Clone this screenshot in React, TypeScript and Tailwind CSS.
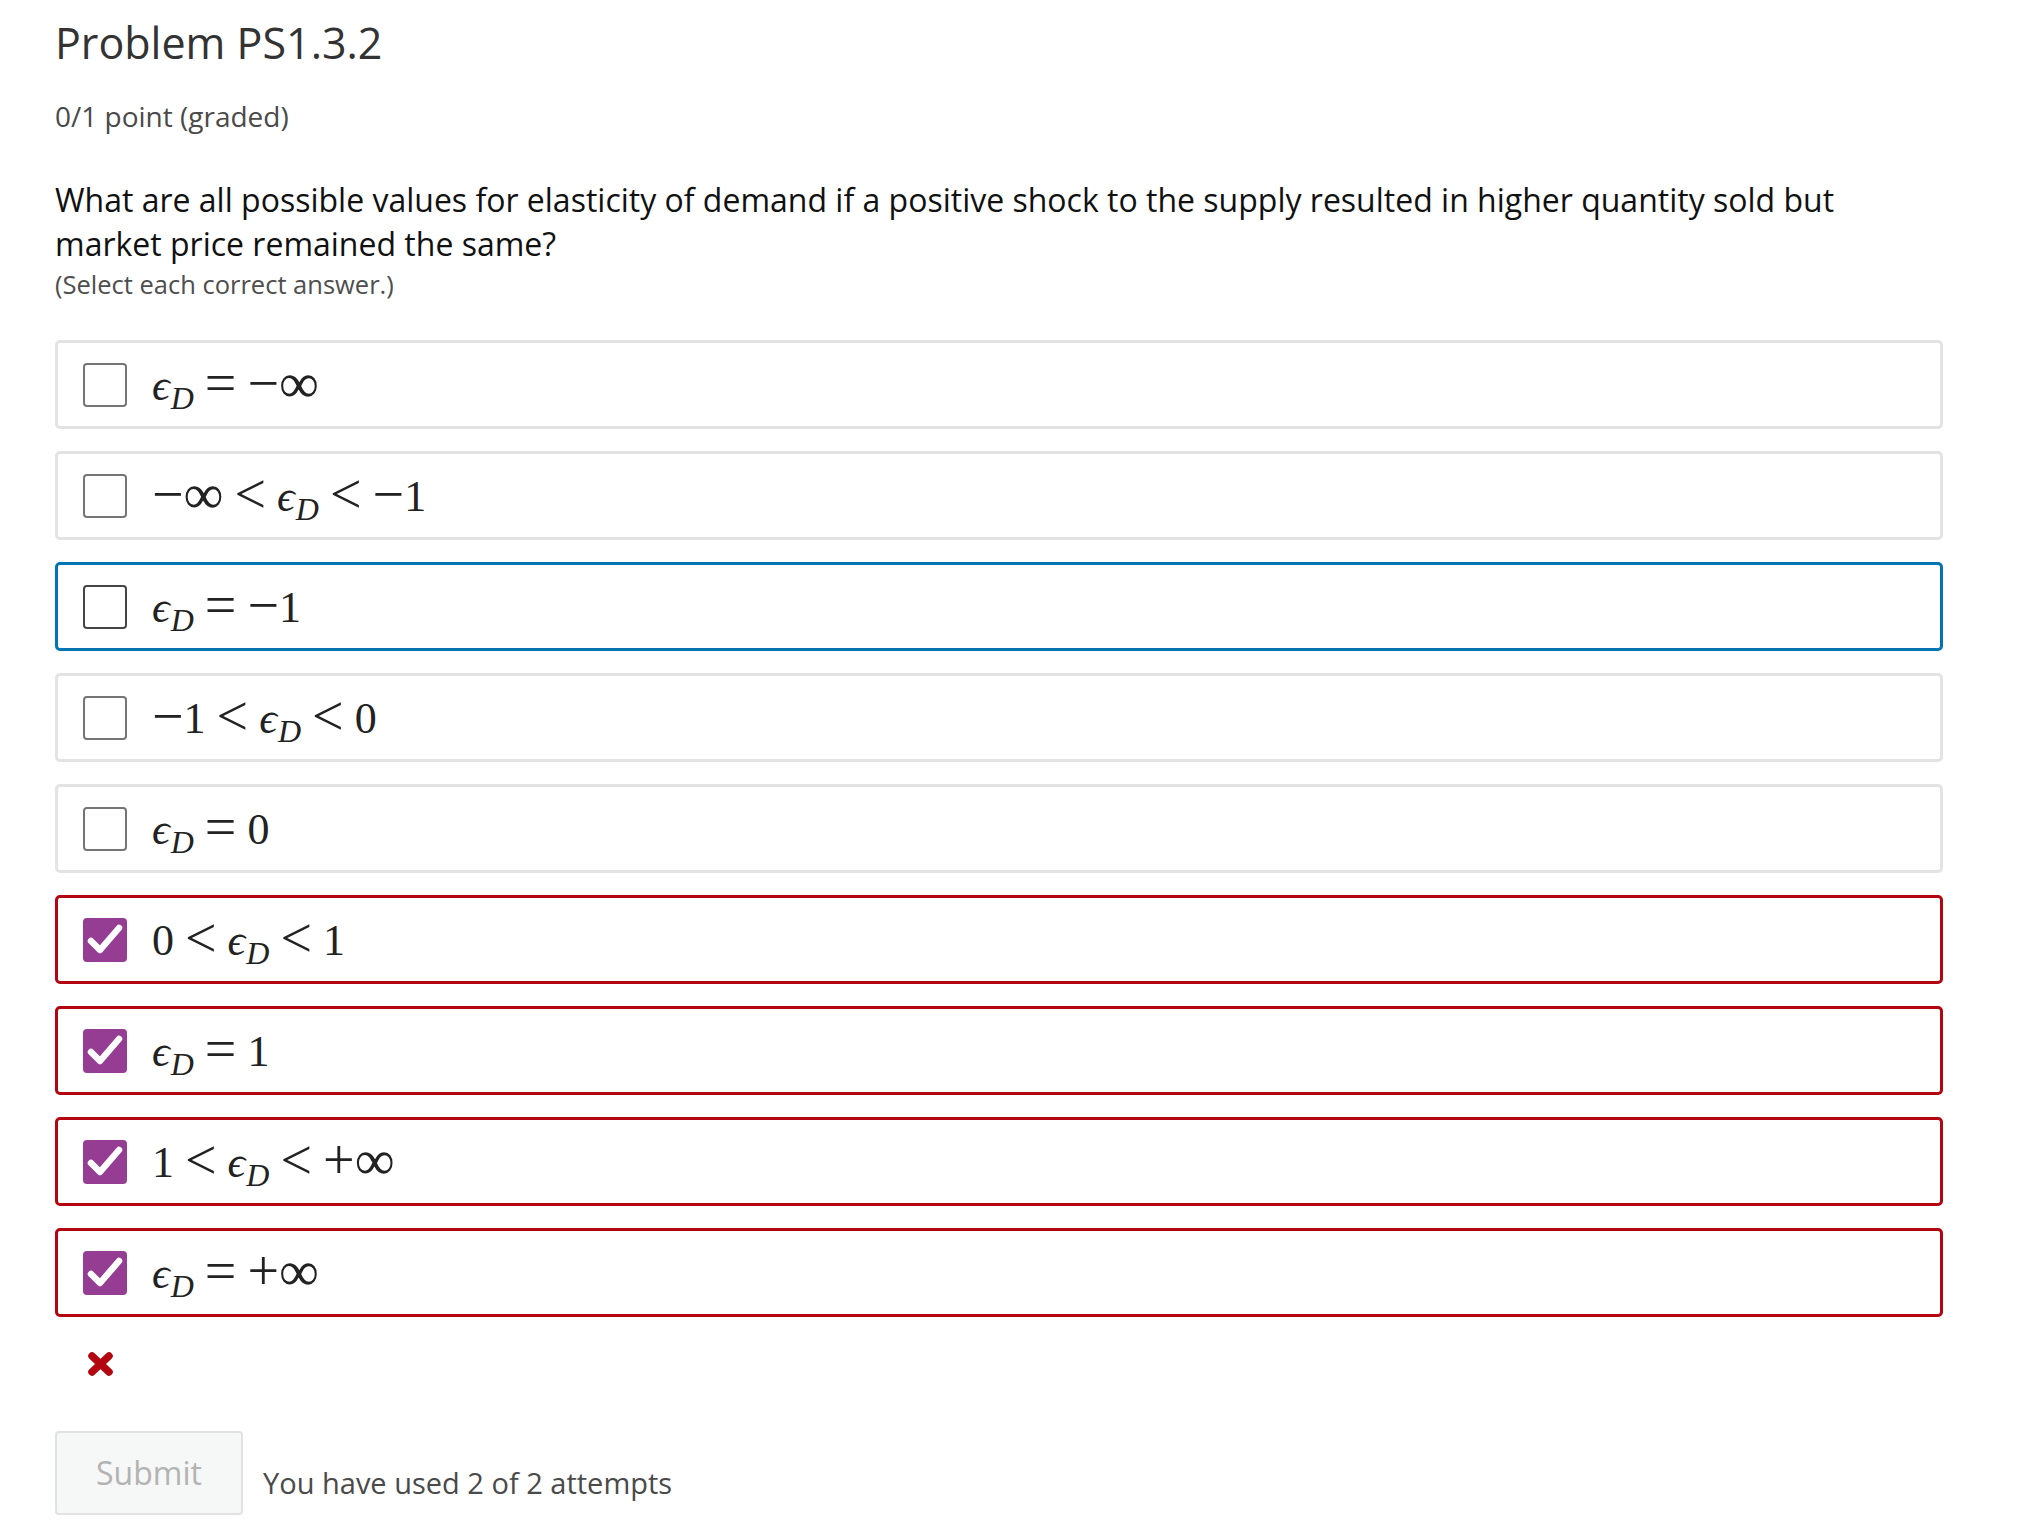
import React from "react";

type Tok = { t: string; k: "ord" | "rel" | "eps" };

type Choice = {
  toks: Tok[];
  state: "plain" | "focus" | "wrong";
  checked: boolean;
};

const eps: Tok = { t: "", k: "eps" };
const rel = (t: string): Tok => ({ t, k: "rel" });
const ord = (t: string): Tok => ({ t, k: "ord" });

const choices: Choice[] = [
  { toks: [eps, rel("="), ord("−∞")], state: "plain", checked: false },
  { toks: [ord("−∞"), rel("<"), eps, rel("<"), ord("−1")], state: "plain", checked: false },
  { toks: [eps, rel("="), ord("−1")], state: "focus", checked: false },
  { toks: [ord("−1"), rel("<"), eps, rel("<"), ord("0")], state: "plain", checked: false },
  { toks: [eps, rel("="), ord("0")], state: "plain", checked: false },
  { toks: [ord("0"), rel("<"), eps, rel("<"), ord("1")], state: "wrong", checked: true },
  { toks: [eps, rel("="), ord("1")], state: "wrong", checked: true },
  { toks: [ord("1"), rel("<"), eps, rel("<"), ord("+∞")], state: "wrong", checked: true },
  { toks: [eps, rel("="), ord("+∞")], state: "wrong", checked: true },
];

// symbols drawn bigger, MathJax's operators are wider than Times'
const bigSym = ["−", "+", "∞"];

const MathExpr: React.FC<{ toks: Tok[] }> = ({ toks }) => (
  <span
    className="flex items-baseline text-[44px] leading-none text-[#222] relative -top-[4px]"
    style={{ fontFamily: '"Liberation Serif", "DejaVu Serif", serif' }}
  >
    {toks.map((tok, i) => {
      if (tok.k === "eps") {
        return (
          <span key={i} className="flex items-baseline">
            <span className="italic">ϵ</span>
            <span className="italic text-[32px] relative top-[9px] ml-[1px]">D</span>
          </span>
        );
      }
      if (tok.k === "rel") {
        return (
          <span key={i} className="mx-[11px] text-[56px] relative top-[2px]">
            {tok.t}
          </span>
        );
      }
      return (
        <span key={i} className="flex items-baseline">
          {Array.from(tok.t).map((ch, j) =>
            bigSym.includes(ch) ? (
              <span key={j} className="text-[56px] relative top-[2px]">
                {ch}
              </span>
            ) : (
              <span key={j}>{ch}</span>
            )
          )}
        </span>
      );
    })}
  </span>
);

const CheckBox: React.FC<{ checked: boolean; dark: boolean }> = ({ checked, dark }) =>
  checked ? (
    <span className="w-[44px] h-[44px] rounded-[4px] bg-[#953d93] flex items-center justify-center shrink-0">
      <svg width="44" height="44" viewBox="0 0 44 44">
        <polyline
          points="8,23 17,32 36,10"
          fill="none"
          stroke="white"
          strokeWidth="6.5"
          strokeLinecap="round"
          strokeLinejoin="round"
        />
      </svg>
    </span>
  ) : (
    <span
      className={
        dark
          ? "w-[44px] h-[44px] rounded-[4px] border-2 border-[#454545] bg-white shrink-0"
          : "w-[44px] h-[44px] rounded-[4px] border-2 border-[#757575] bg-white shrink-0"
      }
    />
  );

export default function App() {
  return (
    <div
      className="min-h-screen bg-white pl-[55px] w-[1943px]"
      style={{ fontFamily: '"Open Sans", "Noto Sans", sans-serif' }}
    >
      <h2 className="pt-[19px] text-[43px] leading-[48px] text-[#333]">Problem PS1.3.2</h2>
      <div className="mt-[31px] text-[28px] leading-[36px] text-[#4a4a4a]">0/1 point (graded)</div>
      <p className="mt-[44px] text-[32px] leading-[44px] text-[#111]">
        What are all possible values for elasticity of demand if a positive shock to the supply resulted in
        higher quantity sold but market price remained the same?
      </p>
      <div className="mt-[1px] text-[25.5px] leading-[34px] text-[#4e4e4e]">(Select each correct answer.)</div>

      <div className="mt-[39px] flex flex-col gap-[22px]">
        {choices.map((c, i) => (
          <label
            key={i}
            className={
              c.state === "focus"
                ? "h-[89px] flex items-center border-[3px] border-[#0075b4] rounded-[5px] pl-[25px]"
                : c.state === "wrong"
                ? "h-[89px] flex items-center border-[3px] border-[#b20610] rounded-[5px] pl-[25px]"
                : "h-[89px] flex items-center border-[3px] border-[#e3e3e3] rounded-[5px] pl-[25px]"
            }
          >
            <CheckBox checked={c.checked} dark={c.state === "focus"} />
            <span className="ml-[25px]">
              <MathExpr toks={c.toks} />
            </span>
          </label>
        ))}
      </div>

      <div className="mt-[35px] ml-[32px] h-[24px] w-[27px]">
        <svg width="27" height="24" viewBox="0 0 27 24">
          <path d="M5 4 L22 20 M22 4 L5 20" stroke="#b20610" strokeWidth="7.5" strokeLinecap="round" />
        </svg>
      </div>

      <div className="mt-[55px] flex items-end gap-[20px]">
        <button
          disabled
          className="w-[188px] h-[84px] rounded-[4px] border-2 border-[#e2e2e2] bg-[#f6f7f7] text-[32px] text-[#b3b3b3]"
        >
          Submit
        </button>
        <span className="mb-[14px] text-[29px] leading-[36px] text-[#4a4a4a]">You have used 2 of 2 attempts</span>
      </div>
    </div>
  );
}
